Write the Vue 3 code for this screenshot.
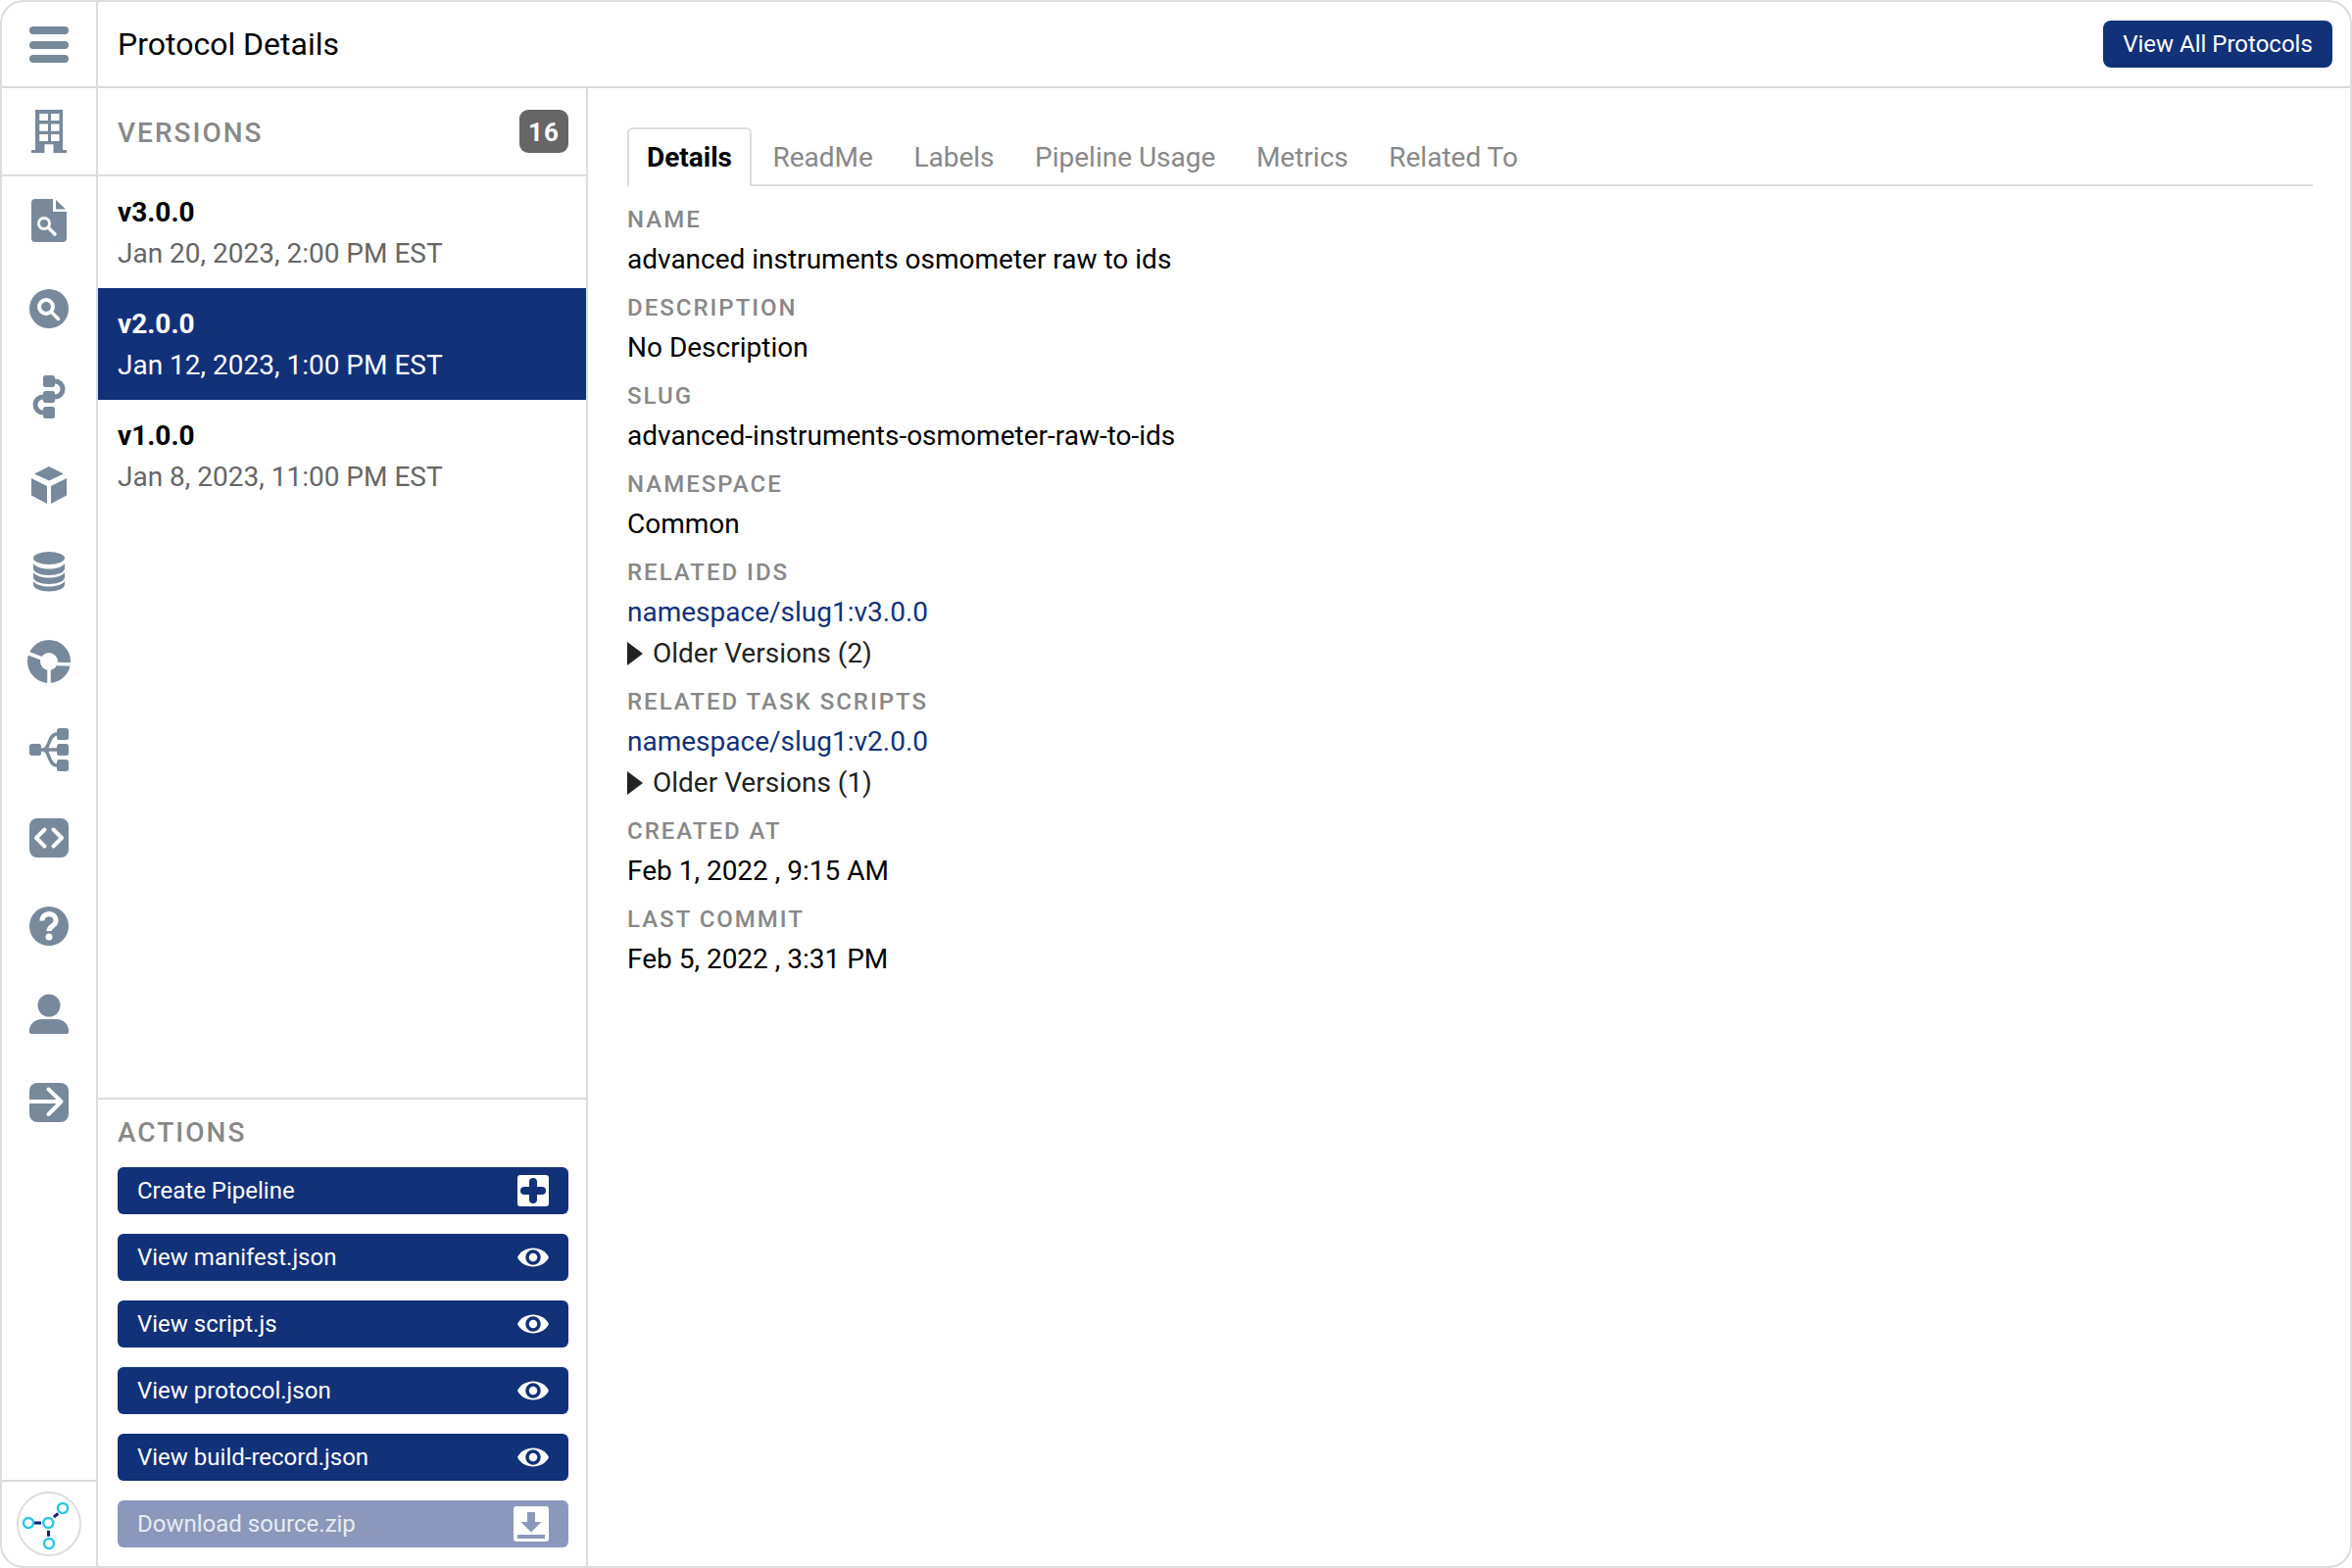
<script setup>
const versions = [
  { name: 'v3.0.0', date: 'Jan 20, 2023, 2:00 PM EST', active: false },
  { name: 'v2.0.0', date: 'Jan 12, 2023, 1:00 PM EST', active: true },
  { name: 'v1.0.0', date: 'Jan 8, 2023, 11:00 PM EST', active: false }
]
const tabs = ['Details', 'ReadMe', 'Labels', 'Pipeline Usage', 'Metrics', 'Related To']
const actions = [
  { label: 'Create Pipeline', icon: 'plus' },
  { label: 'View manifest.json', icon: 'eye' },
  { label: 'View script.js', icon: 'eye' },
  { label: 'View protocol.json', icon: 'eye' },
  { label: 'View build-record.json', icon: 'eye' },
  { label: 'Download source.zip', icon: 'download' }
]
const fields = [
  { label: 'Name', value: 'advanced instruments osmometer raw to ids' },
  { label: 'Description', value: 'No Description' },
  { label: 'Slug', value: 'advanced-instruments-osmometer-raw-to-ids' },
  { label: 'Namespace', value: 'Common' },
  { label: 'Related IDs', link: 'namespace/slug1:v3.0.0', older: 'Older Versions (2)' },
  { label: 'Related Task Scripts', link: 'namespace/slug1:v2.0.0', older: 'Older Versions (1)' },
  { label: 'Created At', value: 'Feb 1, 2022 , 9:15 AM' },
  { label: 'Last Commit', value: 'Feb 5, 2022 , 3:31 PM' }
]
</script>

<template>
  <div class="frame">
    <header class="topbar">
      <div class="burger-cell">
        <svg class="icon" viewBox="0 0 60 60">
          <rect x="10" y="12" width="40" height="8" rx="4" />
          <rect x="10" y="27" width="40" height="8" rx="4" />
          <rect x="10" y="41" width="40" height="8" rx="4" />
        </svg>
      </div>
      <h1 class="title">Protocol Details</h1>
      <button class="all-btn">View All Protocols</button>
    </header>

    <div class="body">
      <nav class="rail">
        <div class="org-cell">
          <svg class="icon" viewBox="0 0 60 60">
            <path fill-rule="evenodd" d="M16 8h28v41h4v3H12v-3h4zM20.300 12v7h8.700v-7zM32 12v7h8.500v-7zM20.300 22.500v7.200h8.700v-7.200zM32 22.500v7.200h8.500v-7.200zM20.300 33v7h8.700v-7zM32 33v7h8.500v-7zM25.500 43.300v8.700h9v-8.700z" />
          </svg>
        </div>
        <div class="rail-list">
          <div class="rail-item">
            <svg class="icon" viewBox="0 0 60 60">
              <path d="M16 8h18v13h14v27a4 4 0 0 1-4 4H16a4 4 0 0 1-4-4V12a4 4 0 0 1 4-4z" />
              <path d="M37 9l10 9.500H37z" />
              <circle cx="25" cy="33" r="5.500" fill="none" stroke="#fff" stroke-width="3" />
              <path d="M29 37l7 7" stroke="#fff" stroke-width="3.500" stroke-linecap="round" />
            </svg>
          </div>
          <div class="rail-item">
            <svg class="icon" viewBox="0 0 60 60">
              <circle cx="30" cy="30" r="20" />
              <circle cx="27" cy="28" r="7" fill="none" stroke="#fff" stroke-width="4" />
              <path d="M32.500 33.500l7 7" stroke="#fff" stroke-width="3.500" stroke-linecap="round" />
            </svg>
          </div>
          <div class="rail-item">
            <svg class="icon" viewBox="0 0 60 60">
              <rect x="24" y="8" width="12" height="12" rx="2.500" />
              <rect x="24" y="24" width="12" height="12" rx="2.500" />
              <rect x="24" y="40" width="12" height="12" rx="2.500" />
              <path d="M34 14h2a8 8 0 0 1 0 16h-2M26 30h-2a8 8 0 0 0 0 16h2" fill="none" stroke="#78899b" stroke-width="5" />
            </svg>
          </div>
          <div class="rail-item">
            <svg class="icon" viewBox="0 0 60 60">
              <path d="M30 11l15 7.500-15 7-15-7z" />
              <path d="M12 23l16 8v18l-16-8.500zM48 23l-16 8v18l16-8.500z" />
            </svg>
          </div>
          <div class="rail-item">
            <svg class="icon" viewBox="0 0 60 60">
              <ellipse cx="30" cy="14.500" rx="16" ry="6.500" />
              <path d="M14 20c3 4 9 5.500 16 5.500S43 24 46 20v5c0 4-7 7-16 7s-16-3-16-7z" />
              <path d="M14 29c3 4 9 5.500 16 5.500S43 33 46 29v5c0 4-7 7-16 7s-16-3-16-7z" />
              <path d="M14 38c3 4 9 5.500 16 5.500S43 42 46 38v3.500c0 4-7 7-16 7s-16-3-16-7z" />
            </svg>
          </div>
          <div class="rail-item">
            <svg class="icon" viewBox="0 0 60 60">
              <circle cx="30" cy="30" r="15.500" fill="none" stroke="#78899b" stroke-width="13" />
              <path d="M30 38v15M38 32.500l16 .5M23 27L7 21" stroke="#fff" stroke-width="3.500" />
            </svg>
          </div>
          <div class="rail-item">
            <svg class="icon" viewBox="0 0 60 60">
              <rect x="10" y="24" width="12" height="12" rx="2.500" />
              <rect x="38" y="8" width="12" height="12" rx="2.500" />
              <rect x="38" y="24" width="12" height="12" rx="2.500" />
              <rect x="38" y="40" width="12" height="12" rx="2.500" />
              <path d="M20 30h20M40 14h-2c-9 0-7 16-14 16 7 0 5 16 14 16h2" fill="none" stroke="#78899b" stroke-width="3.500" />
            </svg>
          </div>
          <div class="rail-item">
            <svg class="icon" viewBox="0 0 60 60">
              <rect x="10" y="10" width="40" height="40" rx="8" />
              <path d="M25.500 21.500L17 30l8.500 8.500M34.500 21.500L43 30l-8.500 8.500" fill="none" stroke="#fff" stroke-width="4" stroke-linecap="round" stroke-linejoin="round" />
            </svg>
          </div>
          <div class="rail-item">
            <svg class="icon" viewBox="0 0 60 60">
              <circle cx="30" cy="30" r="20" />
              <path d="M23 24.500a7 6.500 0 1 1 11 5c-2.500 1.500-4 2.500-4 5.500" fill="none" stroke="#fff" stroke-width="5" />
              <circle cx="30" cy="41" r="3.500" fill="#fff" />
            </svg>
          </div>
          <div class="rail-item">
            <svg class="icon" viewBox="0 0 60 60">
              <circle cx="30" cy="21" r="11.500" />
              <path d="M22 35h16a12 12 0 0 1 12 12v1a2 2 0 0 1-2 2H12a2 2 0 0 1-2-2v-1a12 12 0 0 1 12-12z" />
            </svg>
          </div>
          <div class="rail-item">
            <svg class="icon" viewBox="0 0 60 60">
              <rect x="10" y="10" width="40" height="40" rx="8" />
              <path d="M10 29h32" stroke="#fff" stroke-width="4" />
              <path d="M29.500 16.500L42.500 29 29.500 42" fill="none" stroke="#fff" stroke-width="4" stroke-linecap="round" stroke-linejoin="round" />
            </svg>
          </div>
        </div>
        <div class="brand-cell">
          <div class="brand">
            <svg class="brand-mark" viewBox="0 0 62 62">
              <path d="M16 30h7M36 24l4.300-3.700M30.500 37.700v6" stroke="#15206e" stroke-width="3" fill="none" />
              <g fill="none" stroke="#2bc7e4" stroke-width="2.500">
                <circle cx="30.300" cy="30" r="5" />
                <circle cx="10" cy="30" r="5" />
                <circle cx="45" cy="15" r="5" />
                <circle cx="31" cy="51" r="5" />
              </g>
            </svg>
          </div>
        </div>
      </nav>

      <aside class="versions">
        <div class="versions-head">
          <span class="section-title head-title">VERSIONS</span>
          <span class="badge">16</span>
        </div>
        <ul class="version-list">
          <li v-for="v in versions" :key="v.name" class="version" :class="{ active: v.active }">
            <div class="version-name">{{ v.name }}</div>
            <div class="version-date">{{ v.date }}</div>
          </li>
        </ul>
        <div class="actions">
          <div class="section-title actions-title">ACTIONS</div>
          <div class="action-list">
            <button v-for="a in actions" :key="a.label" class="action" :class="{ muted: a.icon === 'download' }">
              <span>{{ a.label }}</span>
              <svg v-if="a.icon === 'plus'" class="action-icon" viewBox="0 0 36 36">
                <rect x="2" y="2" width="32" height="32" rx="3" fill="#fff" />
                <path d="M18 9v18M9 18h18" stroke="#113179" stroke-width="8" stroke-linecap="round" />
              </svg>
              <svg v-else-if="a.icon === 'eye'" class="action-icon" viewBox="0 0 36 36">
                <path d="M2 18C5 12 11 8.500 18 8.500S31 12 34 18c-3 6-9 9.500-16 9.500S5 24 2 18z" fill="#fff" />
                <circle cx="18" cy="18" r="6" fill="#fff" stroke="#113179" stroke-width="3.500" />
              </svg>
              <svg v-else class="action-icon download" viewBox="0 0 36 36">
                <rect x="0" y="0" width="36" height="36" rx="3" fill="#fff" />
                <path d="M14 6h8v10h6.500L18 26.500 7.500 16H14z" fill="#8b98bc" />
                <rect x="4" y="29" width="28" height="4" fill="#8b98bc" />
              </svg>
            </button>
          </div>
        </div>
      </aside>

      <main class="main">
        <div class="tabs">
          <div v-for="(t, i) in tabs" :key="t" class="tab" :class="{ current: i === 0 }">{{ t }}</div>
        </div>
        <dl class="fields">
          <div v-for="f in fields" :key="f.label" class="field">
            <dt class="field-label">{{ f.label }}</dt>
            <dd v-if="f.value" class="field-value">{{ f.value }}</dd>
            <dd v-else class="field-value">
              <a class="field-link">{{ f.link }}</a>
              <div class="older"><i class="caret"></i>{{ f.older }}</div>
            </dd>
          </div>
        </dl>
      </main>
    </div>
  </div>
</template>

<style scoped>
* { box-sizing: border-box; }
.frame {
  width: 2400px;
  height: 1600px;
  display: flex;
  flex-direction: column;
  border: 2px solid #ddd;
  border-radius: 24px;
  background: #fff;
  font-family: Roboto, sans-serif;
  color: #000;
  overflow: hidden;
}
.icon { width: 60px; height: 60px; fill: #78899b; display: block; }
.topbar {
  height: 88px;
  flex: none;
  display: flex;
  align-items: center;
  border-bottom: 2px solid #ddd;
  padding-right: 18px;
}
.burger-cell {
  width: 98px;
  height: 100%;
  flex: none;
  display: flex;
  align-items: center;
  justify-content: center;
  border-right: 2px solid #ddd;
}
.title {
  margin: 0 0 0 20px;
  flex: 1;
  font-size: 32px;
  font-weight: 400;
}
.all-btn {
  width: 234px;
  height: 48px;
  border: 0;
  border-radius: 8px;
  background: #113179;
  color: #fff;
  font: 400 24px Roboto, sans-serif;
  padding: 0;
}
.body { flex: 1; display: flex; min-height: 0; }
.rail {
  width: 98px;
  flex: none;
  display: flex;
  flex-direction: column;
  border-right: 2px solid #ddd;
}
.org-cell {
  height: 90px;
  flex: none;
  display: flex;
  align-items: center;
  justify-content: center;
  border-bottom: 2px solid #ddd;
}
.rail-list { flex: 1; }
.rail-item {
  height: 90px;
  display: flex;
  align-items: center;
  justify-content: center;
}
.brand-cell {
  height: 88px;
  flex: none;
  border-top: 2px solid #ddd;
  display: flex;
  align-items: center;
  justify-content: center;
}
.brand {
  width: 66px;
  height: 66px;
  border: 2px solid #ddd;
  border-radius: 50%;
  display: flex;
  align-items: center;
  justify-content: center;
}
.brand-mark { width: 62px; height: 62px; display: block; }
.versions {
  width: 500px;
  flex: none;
  display: flex;
  flex-direction: column;
  border-right: 2px solid #ddd;
}
.versions-head {
  height: 90px;
  flex: none;
  display: flex;
  align-items: center;
  justify-content: space-between;
  padding: 0 18px 0 20px;
  border-bottom: 2px solid #ddd;
}
.section-title {
  font-size: 28px;
  font-weight: 500;
  letter-spacing: 2px;
  color: #888;
}
.head-title { padding-top: 2px; }
.badge {
  width: 50px;
  height: 44px;
  border-radius: 9px;
  background: #666;
  color: #fff;
  font-size: 26px;
  font-weight: 700;
  letter-spacing: 1px;
  padding-top: 2px;
  display: flex;
  align-items: center;
  justify-content: center;
}
.version-list { flex: 1; list-style: none; margin: 0; padding: 0; }
.version {
  height: 114px;
  padding: 16px 20px 14px;
  line-height: 42px;
  font-size: 28px;
}
.version-name { font-weight: 700; color: #000; }
.version-date { color: #666; }
.version.active { background: #113179; }
.version.active .version-name,
.version.active .version-date { color: #fff; }
.actions {
  flex: none;
  border-top: 2px solid #ddd;
  padding: 14px 18px 19px 20px;
}
.actions-title { line-height: 40px; margin-bottom: 15px; }
.action-list { display: flex; flex-direction: column; gap: 20px; }
.action {
  height: 48px;
  border: 0;
  border-radius: 6px;
  background: #113179;
  color: #fff;
  font: 400 24px Roboto, sans-serif;
  padding: 0 18px 0 20px;
  display: flex;
  align-items: center;
  justify-content: space-between;
}
.action.muted { background: #8b98bc; color: #e8ebf2; }
.action-icon { width: 36px; height: 36px; display: block; }
.action-icon.download { margin-right: 2px; }
.main { flex: 1; padding: 40px 38px 0 40px; min-width: 0; }
.tabs {
  height: 60px;
  display: flex;
  border-bottom: 2px solid #ddd;
}
.tab {
  height: 60px;
  padding: 0 18px;
  margin-right: 1.500px;
  font-size: 28px;
  line-height: 58px;
  color: #888;
  border: 2px solid transparent;
  border-bottom: 0;
  border-radius: 6px 6px 0 0;
}
.tab.current {
  color: #000;
  font-weight: 700;
  background: #fff;
  border-color: #ddd;
}
.fields { margin: 0; padding-top: 14px; }
.field { margin-bottom: 8px; }
.field-label {
  height: 40px;
  line-height: 40px;
  font-size: 24px;
  font-weight: 500;
  letter-spacing: 2px;
  text-transform: uppercase;
  color: #888;
}
.field-value {
  margin: 0;
  font-size: 28px;
  line-height: 42px;
  color: #000;
}
.field-link { color: #113179; display: block; }
.older { color: #222; display: flex; align-items: center; }
.caret {
  width: 0;
  height: 0;
  border-left: 16px solid #222;
  border-top: 12px solid transparent;
  border-bottom: 12px solid transparent;
  margin-right: 10px;
}
</style>
<style>
body { background: #fff; }
</style>
